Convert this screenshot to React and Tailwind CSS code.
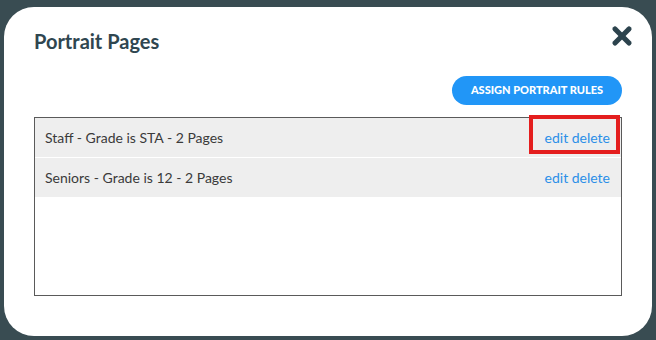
import { X } from "lucide-react";

const RULES = [
  { label: "Staff - Grade is STA - 2 Pages", highlight: true },
  { label: "Seniors - Grade is 12 - 2 Pages", highlight: false },
];

export default function App() {
  return (
    <div
      className="w-[656px] h-[340px] overflow-hidden bg-[#394c52] pl-[4px] pt-[7px]"
      style={{ fontFamily: "Lato, 'Open Sans', sans-serif" }}
    >
      <div className="w-[648px] h-[329px] rounded-[30px] bg-white px-[30px] pt-[20px]">
        <div className="flex items-start justify-between">
          <h1 className="text-[20px] font-bold leading-[28px] text-[#2f4650]">Portrait Pages</h1>
          <X className="mt-[-5px] mr-[-14px] text-[#2c434d]" size={28} strokeWidth={4.4} />
        </div>

        <div className="mt-[21px] flex justify-end">
          <button className="h-[29px] w-[170px] rounded-full bg-[#2196f7] text-[11px] font-black uppercase text-white">
            Assign Portrait Rules
          </button>
        </div>

        <div className="mt-[12px] h-[179px] w-[588px] border border-[#5a5a5a]">
          {RULES.map((r) => (
            <div
              key={r.label}
              className="flex h-[40px] items-center justify-between border-b border-white bg-[#eeeeee] pl-[10px] pr-[11px] text-[14px]"
            >
              <span className="text-[#3a3a3a]">{r.label}</span>
              <span className="relative text-[#2b8fe8]">
                edit delete
                {r.highlight && (
                  <span className="absolute left-[-16px] right-[-10px] top-[-12px] bottom-[-6px] border-[4px] border-[#e41e1e]" />
                )}
              </span>
            </div>
          ))}
        </div>
      </div>
    </div>
  );
}
